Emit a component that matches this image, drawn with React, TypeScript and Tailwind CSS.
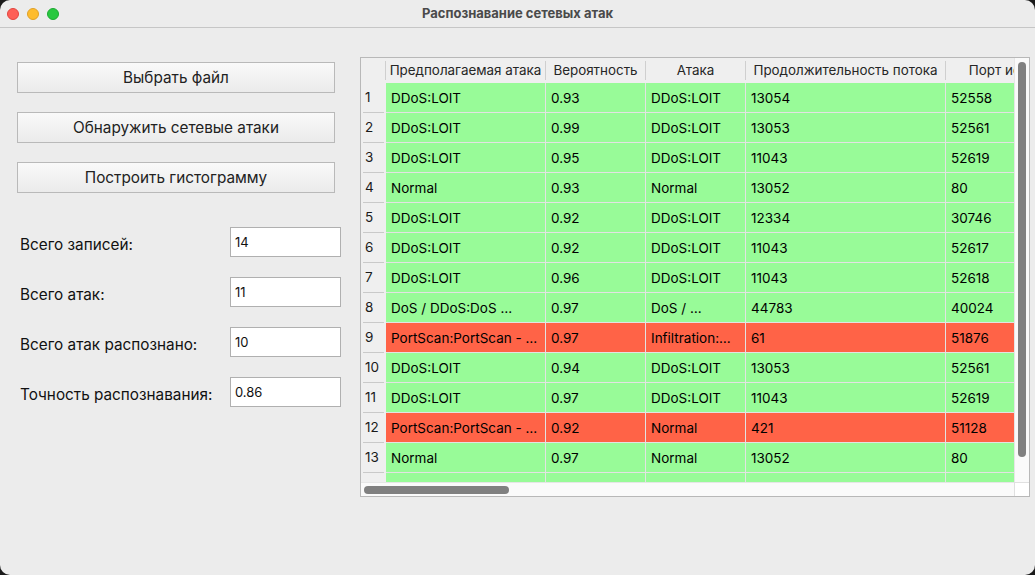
import React from "react";

type Row = { a: string; p: string; b: string; d: string; port: string; red?: boolean };

const rows: Row[] = [
  { a: "DDoS:LOIT", p: "0.93", b: "DDoS:LOIT", d: "13054", port: "52558" },
  { a: "DDoS:LOIT", p: "0.99", b: "DDoS:LOIT", d: "13053", port: "52561" },
  { a: "DDoS:LOIT", p: "0.95", b: "DDoS:LOIT", d: "11043", port: "52619" },
  { a: "Normal", p: "0.93", b: "Normal", d: "13052", port: "80" },
  { a: "DDoS:LOIT", p: "0.92", b: "DDoS:LOIT", d: "12334", port: "30746" },
  { a: "DDoS:LOIT", p: "0.92", b: "DDoS:LOIT", d: "11043", port: "52617" },
  { a: "DDoS:LOIT", p: "0.96", b: "DDoS:LOIT", d: "11043", port: "52618" },
  { a: "DoS / DDoS:DoS …", p: "0.97", b: "DoS / …", d: "44783", port: "40024" },
  { a: "PortScan:PortScan - …", p: "0.97", b: "Infiltration:…", d: "61", port: "51876", red: true },
  { a: "DDoS:LOIT", p: "0.94", b: "DDoS:LOIT", d: "13053", port: "52561" },
  { a: "DDoS:LOIT", p: "0.97", b: "DDoS:LOIT", d: "11043", port: "52619" },
  { a: "PortScan:PortScan - …", p: "0.92", b: "Normal", d: "421", port: "51128", red: true },
  { a: "Normal", p: "0.97", b: "Normal", d: "13052", port: "80" },
  { a: "", p: "", b: "", d: "", port: "" },
];

const font = { fontFamily: "Inter, 'Noto Sans', sans-serif" };

function Btn({ children }: { children: React.ReactNode }) {
  return (
    <div className="w-[318px] h-[31px] flex items-center justify-center pt-[2px] border border-[#b9b9b9] bg-linear-to-b from-[#f9f9f9] to-[#ebebeb] text-[15.3px] text-[#222]">
      {children}
    </div>
  );
}

function Field({ label, value }: { label: string; value: string }) {
  return (
    <div className="flex items-center h-[30px]">
      <div className="w-[230px] pl-[20px] pt-[6px] text-[15.3px] text-[#111] whitespace-nowrap">{label}</div>
      <div className="w-[111px] h-[30px] bg-white border border-[#b0b0b0] pl-[4px] pt-[5px] text-[13px] text-[#111]">
        {value}
      </div>
    </div>
  );
}

export default function App() {
  return (
    <div className="w-[1035px] h-[575px] bg-[#1a1a1a]" style={font}>
      <div className="w-full h-full bg-[#ececec] rounded-[10px] overflow-hidden flex flex-col">
        {/* title bar */}
        <div className="h-[28px] border-b border-[#c6c6c6] flex items-center relative">
          <div className="flex gap-[8px] pl-[7px]">
            <div className="w-[12px] h-[12px] rounded-full bg-[#fe5f57] border border-[#e2463f]" />
            <div className="w-[12px] h-[12px] rounded-full bg-[#febc2e] border border-[#e0a028]" />
            <div className="w-[12px] h-[12px] rounded-full bg-[#28c840] border border-[#1daa32]" />
          </div>
          <div className="absolute inset-0 flex items-center justify-center text-[13px] font-bold text-[#4a4a4a]">
            Распознавание сетевых атак
          </div>
        </div>

        <div className="flex flex-1">
          {/* left panel */}
          <div className="w-[360px] pt-[34px]">
            <div className="pl-[17px] flex flex-col gap-[19px]">
              <Btn>Выбрать файл</Btn>
              <Btn>Обнаружить сетевые атаки</Btn>
              <Btn>Построить гистограмму</Btn>
            </div>
            <div className="mt-[34px] flex flex-col gap-[20px]">
              <Field label="Всего записей:" value="14" />
              <Field label="Всего атак:" value="11" />
              <Field label="Всего атак распознано:" value="10" />
              <Field label="Точность распознавания:" value="0.86" />
            </div>
          </div>

          {/* table */}
          <div className="pt-[29px]">
            <div className="w-[670px] h-[440px] border border-[#b8b8b8] bg-white flex flex-col">
              <div className="flex h-[424px]">
                <div className="w-[654px] overflow-hidden">
                  {/* header */}
                  <div className="flex h-[25px] bg-[#efefef] text-[13.4px] text-[#262626] whitespace-nowrap">
                    <div className="w-[25px] shrink-0 border-r border-[#cfcfcf] my-[3px]" />
                    <div className="w-[160px] shrink-0 flex items-center justify-center border-r border-[#cfcfcf] my-[3px] overflow-hidden">Предполагаемая атака</div>
                    <div className="w-[100px] shrink-0 flex items-center justify-center border-r border-[#cfcfcf] my-[3px]">Вероятность</div>
                    <div className="w-[100px] shrink-0 flex items-center justify-center border-r border-[#cfcfcf] my-[3px]">Атака</div>
                    <div className="w-[200px] shrink-0 flex items-center justify-center border-r border-[#cfcfcf] my-[3px]">Продолжительность потока</div>
                    <div className="w-[150px] shrink-0 flex items-center justify-center my-[3px]">Порт источника</div>
                  </div>
                  {rows.map((r, i) => {
                    const bg = r.red ? "bg-[#ff6347]" : "bg-[#98fb98]";
                    return (
                      <div key={i} className="flex h-[30px] text-[13.5px] text-black whitespace-nowrap">
                        <div className="w-[25px] shrink-0 bg-[#efefef] flex flex-col">
                          <div className="flex-1 flex items-center pl-[4px] text-[#1a1a1a]">{i < 13 ? i + 1 : ""}</div>
                          <div className="h-[1px] mx-[2px] bg-[#c9c9c9]" />
                        </div>
                        <div className={`w-[160px] shrink-0 ${bg} flex items-center pl-[5px] pt-[1px] border-r border-b border-[#e3e3e3]`}>{r.a}</div>
                        <div className={`w-[100px] shrink-0 ${bg} flex items-center pl-[5px] pt-[1px] border-r border-b border-[#e3e3e3]`}>{r.p}</div>
                        <div className={`w-[100px] shrink-0 ${bg} flex items-center pl-[5px] pt-[1px] border-r border-b border-[#e3e3e3]`}>{r.b}</div>
                        <div className={`w-[200px] shrink-0 ${bg} flex items-center pl-[5px] pt-[1px] border-r border-b border-[#e3e3e3]`}>{r.d}</div>
                        <div className={`w-[150px] shrink-0 ${bg} flex items-center pl-[5px] pt-[1px] border-b border-[#e3e3e3]`}>{r.port}</div>
                      </div>
                    );
                  })}
                </div>
                {/* vertical scrollbar */}
                <div className="w-[15px] bg-[#fafafa] border-l border-[#e6e6e6] flex justify-center pt-[4px]">
                  <div className="w-[8px] h-[395px] rounded-full bg-[#808080]" />
                </div>
              </div>
              {/* horizontal scrollbar */}
              <div className="flex h-[15px]">
                <div className="w-[654px] bg-[#fafafa] border-t border-[#e6e6e6] flex items-center pl-[3px]">
                  <div className="w-[145px] h-[8px] rounded-full bg-[#808080]" />
                </div>
                <div className="w-[15px] bg-white border-t border-l border-[#e0e0e0]" />
              </div>
            </div>
          </div>
        </div>
      </div>
    </div>
  );
}
